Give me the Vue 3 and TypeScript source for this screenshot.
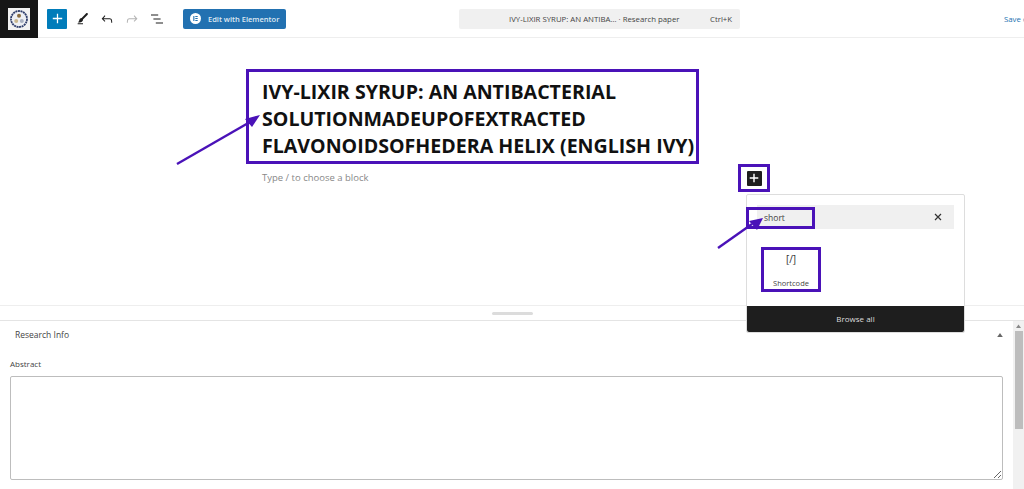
<script setup lang="ts">
import { ref } from 'vue';

const search = ref('short');
const abstract = ref('');
const title = ['IVY-LIXIR SYRUP: AN ANTIBACTERIAL', 'SOLUTIONMADEUPOFEXTRACTED', 'FLAVONOIDSOFHEDERA HELIX (ENGLISH IVY)'];
</script>

<template>
  <div class="page">
    <header class="topbar">
      <div class="logo">
        <svg width="22" height="22" viewBox="0 0 22 22">
          <rect width="22" height="22" fill="#f2f2f2" />
          <circle cx="11" cy="11" r="8" fill="#eef0f4" stroke="#2f3e6b" stroke-width="1.800" stroke-dasharray="2 0.600" />
          <circle cx="11" cy="7.800" r="2" fill="#8a6d3f" />
          <circle cx="8.200" cy="13" r="2" fill="#c9b78f" />
          <circle cx="13.800" cy="13" r="2" fill="#a9b1c2" />
        </svg>
      </div>
      <div class="tools">
        <button class="add"><svg width="11" height="11" viewBox="0 0 14 14"><path d="M6.200 1h1.600v5.200H13v1.600H7.800V13H6.200V7.800H1V6.200h5.200z" fill="#fff" /></svg></button>
        <svg class="tool pen" viewBox="0 0 24 24"><path d="M4 20h8v-1.500H4V20zM18.900 3.500c-.6-.6-1.500-.6-2.100 0l-7.200 7.200c-.4-.1-.7 0-1.100.1-.5.2-1.500.7-1.900 2.200-.4 1.700-.8 2.200-1.100 2.700-.1.1-.2.3-.3.4l-.6 1.100H6c2 0 3.400-.4 4.700-1.400.8-.6 1.200-1.400 1.300-2.300 0-.3 0-.5-.1-.7L19 5.700c.5-.6.5-1.600-.1-2.200z" /></svg>
        <svg class="tool" viewBox="0 0 24 24"><path d="M18.300 11.700c-.6-.6-1.400-.9-2.300-.9H6.700l2.900-3.300-1.100-1-4.500 5L8.500 16l1-1-2.700-2.700H16c.5 0 .9.2 1.300.5 1 1 1 3.400 1 4.500v.3h1.500v-.2c0-1.500 0-4.300-1.500-5.700z" /></svg>
        <svg class="tool off" viewBox="0 0 24 24"><path d="M15.600 6.500l-1.100 1 2.900 3.300H8c-.9 0-1.700.3-2.300.9-1.400 1.500-1.400 4.200-1.400 5.600v.2h1.500v-.3c0-1.100 0-3.500 1-4.500.3-.3.7-.5 1.300-.5h9.200L14.500 15l1.100 1.100 4.600-4.600-4.600-5z" /></svg>
        <svg class="tool" viewBox="0 0 24 24"><path d="M13.800 5.200H3v1.500h10.800V5.200zm-3.600 12v1.500H21v-1.500H10.200zm7.200-6H6.600v1.500h10.800v-1.500z" /></svg>
        <button class="elementor">
          <svg width="11" height="11" viewBox="0 0 11 11"><circle cx="5.500" cy="5.500" r="5.500" fill="#fff" /><rect x="3.300" y="3" width="1.100" height="5" fill="#2271b1" /><rect x="5.300" y="3" width="2.400" height="1" fill="#2271b1" /><rect x="5.300" y="5" width="2.400" height="1" fill="#2271b1" /><rect x="5.300" y="7" width="2.400" height="1" fill="#2271b1" /></svg>
          Edit with Elementor
        </button>
      </div>
      <div class="command">
        <span class="command-title">IVY-LIXIR SYRUP: AN ANTIBA... · Research paper</span>
        <span class="shortcut">Ctrl+K</span>
      </div>
      <span class="save">Save draft</span>
    </header>

    <main class="editor">
      <h1 class="title"><span v-for="line in title" :key="line">{{ line }}</span></h1>
      <p class="placeholder">Type / to choose a block</p>

      <div class="mark-plus">
        <span class="dark-plus"><svg width="10" height="10" viewBox="0 0 14 14"><path d="M6 1h2v5h5v2H8v5H6V8H1V6h5z" fill="#fff" /></svg></span>
      </div>

      <div class="popover">
        <div class="search">
          <input v-model="search" />
          <svg width="8" height="8" viewBox="0 0 8 8"><path d="M1 1l6 6M7 1L1 7" stroke="#333" stroke-width="1.200" /></svg>
        </div>
        <div class="results">
          <div class="block">
            <span class="block-icon">[/]</span>
            <span class="block-name">Shortcode</span>
          </div>
        </div>
        <div class="browse">Browse all</div>
      </div>
      <div class="mark-search"></div>

      <svg class="arrows" width="1024" height="489" viewBox="0 0 1024 489">
        <path d="M177 164L250 122" stroke="#4a12b8" stroke-width="2.400" />
        <path d="M260 115L252 127 245 119z" fill="#4a12b8" />
        <path d="M718 248L752 224" stroke="#4a12b8" stroke-width="2.400" />
        <path d="M763 218L757 230 749 221z" fill="#4a12b8" />
      </svg>
    </main>

    <div class="handle-row"><span class="handle"></span></div>

    <section class="meta">
      <div class="meta-body">
        <div class="meta-head">
          <span>Research Info</span>
          <svg width="6" height="4" viewBox="0 0 7 5"><path d="M3.500 0L7 5H0z" fill="#666" /></svg>
        </div>
        <label class="field-label" for="abstract">Abstract</label>
        <textarea id="abstract" v-model="abstract" class="field"></textarea>
      </div>
      <div class="scrollbar">
        <svg width="7" height="5" viewBox="0 0 7 5"><path d="M3.500 0.500L6 4H1z" fill="#888" /></svg>
        <span class="thumb"></span>
      </div>
    </section>
  </div>
</template>

<style>
html,
body {
  margin: 0;
  background: #fff;
  overflow: hidden;
}
</style>

<style scoped>
.page {
  position: relative;
  display: flex;
  flex-direction: column;
  width: 1024px;
  height: 489px;
  overflow: hidden;
  font-family: "Open Sans", "Noto Sans", sans-serif;
  color: #1e1e1e;
}

.topbar {
  display: flex;
  align-items: center;
  height: 37px;
  flex: none;
  border-bottom: 1px solid #eeeeee;
}

.logo {
  display: flex;
  align-items: center;
  justify-content: center;
  width: 38px;
  height: 38px;
  flex: none;
  background: #161616;
}

.tools {
  display: flex;
  align-items: center;
  width: 421px;
  flex: none;
  padding-left: 9px;
  box-sizing: border-box;
}

.add {
  display: flex;
  align-items: center;
  justify-content: center;
  width: 20px;
  height: 20px;
  margin-right: 8px;
  padding: 0;
  border: 0;
  border-radius: 1px;
  background: #007cba;
}

.tool {
  width: 16px;
  height: 16px;
  margin-right: 9px;
  fill: #1e1e1e;
}

.tool.pen {
  margin-right: 8px;
}

.tool.off {
  fill: #b4b4b4;
}

.elementor {
  display: flex;
  align-items: center;
  gap: 7px;
  width: 103px;
  height: 20px;
  margin-left: 9px;
  padding: 0 0 0 7px;
  border: 0;
  border-radius: 2px;
  background: #2271b1;
  color: #dfe9f3;
  font-family: inherit;
  font-size: 7.500px;
  font-weight: 600;
  white-space: nowrap;
}

.command {
  display: flex;
  align-items: center;
  width: 281px;
  height: 20px;
  flex: none;
  border-radius: 2px;
  background: #f0f0f0;
  font-size: 7.800px;
  color: #444;
}

.command-title {
  width: 222px;
  padding-left: 50px;
  box-sizing: border-box;
  white-space: nowrap;
}

.shortcut {
  margin-left: 29px;
}

.save {
  margin-left: 264px;
  font-size: 7.800px;
  color: #2271b1;
  white-space: nowrap;
}

.editor {
  height: 267px;
  flex: none;
  padding: 31px 0 0 246px;
  box-sizing: border-box;
}

.title {
  display: flex;
  flex-direction: column;
  width: 453px;
  height: 95px;
  margin: 0;
  padding: 6px 0 0 13px;
  box-sizing: border-box;
  border: 3px solid #4a12b8;
  font-size: 19.600px;
  font-weight: 700;
  line-height: 27px;
  color: #111;
  white-space: nowrap;
}

.placeholder {
  margin: 7px 0 0 16px;
  font-size: 9.500px;
  line-height: 13px;
  color: #888;
}

.mark-plus {
  position: absolute;
  left: 738px;
  top: 164px;
  display: flex;
  align-items: center;
  justify-content: center;
  width: 32px;
  height: 28px;
  box-sizing: border-box;
  border: 3px solid #4a12b8;
}

.dark-plus {
  display: flex;
  align-items: center;
  justify-content: center;
  width: 15px;
  height: 15px;
  border-radius: 1px;
  background: #1e1e1e;
}

.popover {
  position: absolute;
  z-index: 2;
  left: 746px;
  top: 194px;
  display: flex;
  flex-direction: column;
  width: 219px;
  height: 139px;
  box-sizing: border-box;
  border: 1px solid #ddd;
  border-radius: 2px;
  background: #fff;
}

.search {
  display: flex;
  align-items: center;
  justify-content: space-between;
  height: 24px;
  margin: 10px 10px 0;
  padding: 0 12px 0 7px;
  background: #f0f0f0;
}

.search input {
  width: 100px;
  padding: 0;
  border: 0;
  outline: 0;
  background: transparent;
  font-family: inherit;
  font-size: 8.500px;
  color: #444;
}

.results {
  flex: 1;
  padding: 18px 0 0 14px;
}

.block {
  display: flex;
  flex-direction: column;
  align-items: center;
  width: 60px;
  height: 45px;
  box-sizing: border-box;
  border: 3px solid #4a12b8;
}

.block-icon {
  margin-top: 2px;
  font-size: 10px;
  line-height: 14px;
  color: #333;
}

.block-name {
  margin-top: 12px;
  font-size: 7.500px;
  line-height: 10px;
  color: #444;
}

.browse {
  height: 26px;
  flex: none;
  border-radius: 0 0 2px 2px;
  background: #1e1e1e;
  color: #ddd;
  font-size: 8px;
  line-height: 26px;
  text-align: center;
}

.mark-search {
  position: absolute;
  z-index: 3;
  left: 746px;
  top: 207px;
  width: 69px;
  height: 22px;
  box-sizing: border-box;
  border: 3px solid #4a12b8;
}

.arrows {
  position: absolute;
  z-index: 4;
  left: 0;
  top: 0;
  pointer-events: none;
}

.handle-row {
  display: flex;
  align-items: center;
  justify-content: center;
  height: 16px;
  flex: none;
  box-sizing: border-box;
  border-top: 1px solid #eeeeee;
  border-bottom: 1px solid #e4e4e4;
}

.handle {
  width: 41px;
  height: 3px;
  border-radius: 2px;
  background: #dcdcdc;
}

.meta {
  display: flex;
  flex: 1;
  min-height: 0;
}

.meta-body {
  flex: 1;
  padding: 7px 10px 0;
}

.meta-head {
  display: flex;
  align-items: center;
  justify-content: space-between;
  height: 13px;
  padding: 0 0 0 5px;
  font-size: 8.500px;
  color: #444;
}

.field-label {
  display: block;
  margin-top: 16px;
  font-size: 8px;
  line-height: 13px;
  color: #444;
}

.field {
  display: block;
  width: 100%;
  height: 104px;
  margin-top: 6px;
  padding: 4px;
  box-sizing: border-box;
  border: 1px solid #bdbdbd;
  border-radius: 2px;
  outline: 0;
}

.scrollbar {
  display: flex;
  flex-direction: column;
  align-items: center;
  width: 11px;
  flex: none;
  background: #f1f1f1;
}

.scrollbar svg {
  margin-top: 3px;
}

.thumb {
  width: 8px;
  height: 98px;
  margin-top: 2px;
  background: #bdbdbd;
}
</style>
